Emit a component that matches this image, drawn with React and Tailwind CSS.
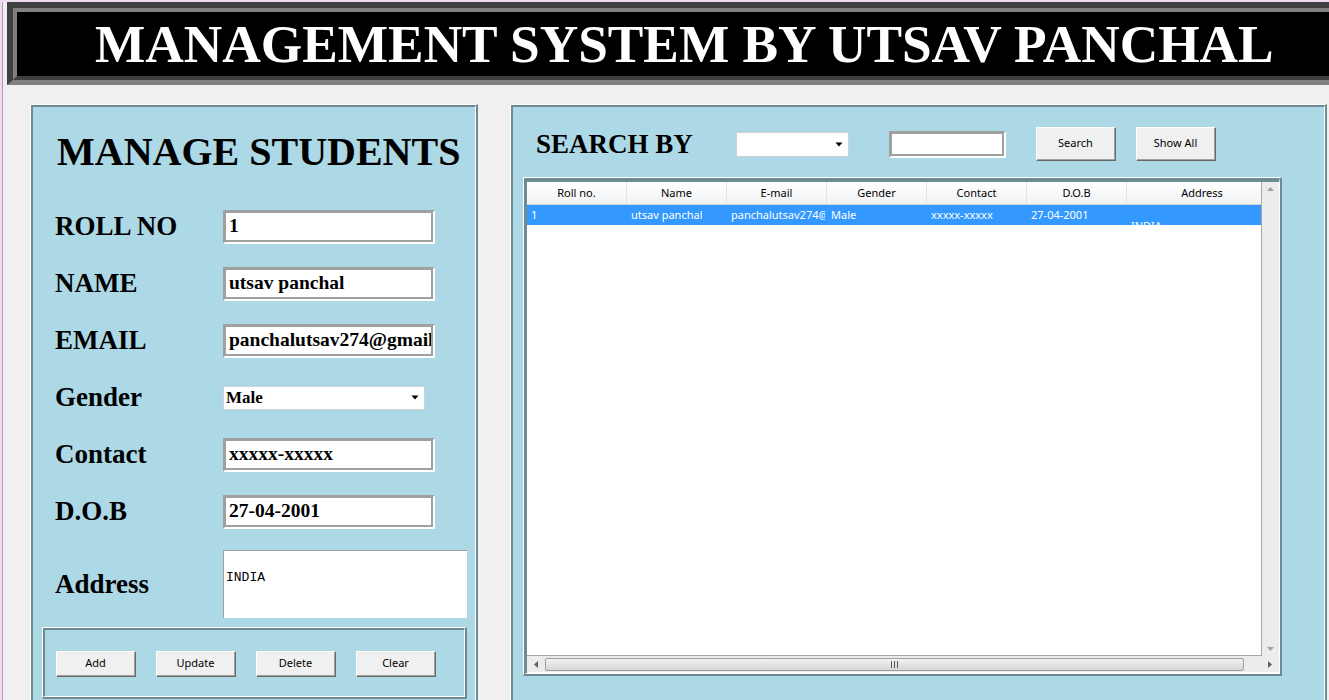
import React from "react";

const SERIF = "font-['Liberation_Serif','Times_New_Roman',serif]";
const SANS = "font-['Noto_Sans','Open_Sans',sans-serif]";
const MONO = "font-['Liberation_Mono','Courier_New',monospace]";

function Ridge({ className = "", innerClass = "", children }) {
  return (
    <div
      className={`border-t border-l border-r-2 border-b-2 border-t-white border-l-white border-r-[#6d8b91] border-b-[#6d8b91] ${className}`}
    >
      <div
        className={`h-full border-t-2 border-l-2 border-r border-b border-t-[#6d8b91] border-l-[#6d8b91] border-r-white border-b-white ${innerClass}`}
      >
        {children}
      </div>
    </div>
  );
}

function Entry({ value = "", w = "w-[212px]", h = "h-[34px]" }) {
  return (
    <div
      className={`${w} ${h} shrink-0 border-t-2 border-l-2 border-b-2 border-r-2 border-t-[#a0a0a0] border-l-[#a0a0a0] border-b-white border-r-white`}
    >
      <div
        className={`h-full border-t border-l border-b-2 border-r-2 border-[#a0a0a0] bg-white flex items-center pl-[3px] overflow-hidden whitespace-nowrap ${SERIF} font-bold text-[19.5px] leading-none text-black`}
      >
        {value}
      </div>
    </div>
  );
}

function Arrow() {
  return (
    <svg width="8" height="5" viewBox="0 0 8 5" className="shrink-0">
      <path d="M0.5 0.5 L7.5 0.5 L4 4.5 Z" fill="#000" />
    </svg>
  );
}

function Combo({ value = "", w, h }) {
  return (
    <div
      className={`${w} ${h} shrink-0 bg-white border border-[#cbd3d7] flex items-center justify-between pl-[2px] pr-[5px]`}
    >
      <span className={`${SERIF} font-bold text-[17px] leading-none text-black`}>{value}</span>
      <Arrow />
    </div>
  );
}

function Btn({ label, h = "h-[26px]" }) {
  return (
    <div
      className={`w-[80px] ${h} shrink-0 bg-[#f0f0f0] border-t border-l border-r border-b border-t-white border-l-white border-r-[#696969] border-b-[#696969]`}
    >
      <div
        className={`h-full border-r border-b border-r-[#a0a0a0] border-b-[#a0a0a0] flex items-center justify-center ${SANS} text-[11px] text-black`}
      >
        {label}
      </div>
    </div>
  );
}

const cols = [
  { h: "Roll no.", v: "1" },
  { h: "Name", v: "utsav panchal" },
  { h: "E-mail", v: "panchalutsav274@gmail.com" },
  { h: "Gender", v: "Male" },
  { h: "Contact", v: "xxxxx-xxxxx" },
  { h: "D.O.B", v: "27-04-2001" },
];

const formRows = [
  { label: "ROLL NO", type: "entry", value: "1" },
  { label: "NAME", type: "entry", value: "utsav panchal" },
  { label: "EMAIL", type: "entry", value: "panchalutsav274@gmail.com" },
  { label: "Gender", type: "combo", value: "Male" },
  { label: "Contact", type: "entry", value: "xxxxx-xxxxx" },
  { label: "D.O.B", type: "entry", value: "27-04-2001" },
];

export default function App() {
  return (
    <div className="w-[1329px] h-[700px] overflow-hidden bg-[#f0f0f0] flex flex-col">
      <div className="h-[2px] shrink-0 bg-[#ecdcec]" />
      <div className="flex flex-1 min-h-0">
        <div className="w-[2px] shrink-0 bg-[#ecdcec]" />
        <div className="w-px shrink-0 bg-[#b49ab4]" />
        <div className="flex-1 min-w-0 flex flex-col">
          {/* Header */}
          <div className="ml-[4px] w-[1360px] shrink-0 border-t-[6px] border-l-[6px] border-b-[5px] border-t-[#404040] border-l-[#404040] border-b-[#808080]">
            <div className="h-[72px] border-t-4 border-l-4 border-b-4 border-t-[#808080] border-l-[#808080] border-b-[#404040] bg-black pl-[78px] pt-[6px]">
              <div
                className={`${SERIF} font-bold text-[53.3px] leading-none text-white whitespace-nowrap`}
              >
                MANAGEMENT SYSTEM BY UTSAV PANCHAL
              </div>
            </div>
          </div>

          <div className="flex mt-[19px]">
            {/* Left panel */}
            <Ridge className="ml-[27px] w-[448px] h-[620px] shrink-0" innerClass="bg-[#add8e6]">
              <div
                className={`pl-[24px] pt-[25px] h-[64px] ${SERIF} font-bold text-[40px] leading-none text-black whitespace-nowrap`}
              >
                MANAGE STUDENTS
              </div>
              <div className="mt-[27px] flex flex-col">
                {formRows.map((r) => (
                  <div key={r.label} className="h-[57px] flex items-center pl-[22px]">
                    <div
                      className={`w-[168px] shrink-0 ${SERIF} font-bold text-[27px] leading-none text-black`}
                    >
                      {r.label}
                    </div>
                    {r.type === "entry" ? (
                      <Entry value={r.value} />
                    ) : (
                      <Combo value={r.value} w="w-[202px]" h="h-[24px]" />
                    )}
                  </div>
                ))}
                <div className="mt-[10px] h-[68px] flex items-center pl-[22px]">
                  <div
                    className={`w-[168px] shrink-0 ${SERIF} font-bold text-[27px] leading-none text-black`}
                  >
                    Address
                  </div>
                  <div
                    className={`w-[244px] h-[68px] shrink-0 bg-white border-t border-l border-[#a0a0a0] pl-[2px] pt-[20px] ${MONO} text-[13px] leading-none text-black`}
                  >
                    INDIA
                  </div>
                </div>
              </div>
              <Ridge
                className="ml-[9px] mt-[9px] w-[425px] h-[72px]"
                innerClass="bg-[#add8e6] flex gap-[20px] pl-[11px] pt-[21px]"
              >
                <Btn label="Add" />
                <Btn label="Update" />
                <Btn label="Delete" />
                <Btn label="Clear" />
              </Ridge>
            </Ridge>

            {/* Right panel */}
            <Ridge className="ml-[32px] w-[817px] h-[620px] shrink-0" innerClass="bg-[#add8e6]">
              <div className="mt-[20px] h-[34px] flex items-center pl-[23px]">
                <div
                  className={`w-[200px] shrink-0 ${SERIF} font-bold text-[27px] leading-none text-black whitespace-nowrap`}
                >
                  SEARCH BY
                </div>
                <Combo value="" w="w-[113px]" h="h-[25px]" />
                <div className="ml-[40px]">
                  <Entry value="" w="w-[117px]" h="h-[27px]" />
                </div>
                <div className="ml-[30px]">
                  <Btn label="Search" h="h-[34px]" />
                </div>
                <div className="ml-[20px]">
                  <Btn label="Show All" h="h-[34px]" />
                </div>
              </div>

              {/* Table frame */}
              <div className="ml-[10px] mt-[16px] w-[759px] border-t border-l border-r-2 border-b-2 border-t-white border-l-white border-r-[#6d8b91] border-b-[#6d8b91]">
                <div className="border-t-4 border-l-[3px] border-r border-b border-t-[#6d8b91] border-l-[#6d8b91] border-r-white border-b-white pb-px bg-white">
                  <div className="w-[752px] h-[490px] flex flex-col bg-white">
                    <div className="flex h-[474px]">
                      <div className="w-[735px] h-full overflow-hidden border-r border-b border-r-[#a8a8a8] border-b-[#a8a8a8] bg-white">
                        <div className="w-[750px]">
                          <div className="flex h-[23px] border-b border-b-[#d5d5d5] bg-linear-to-b from-white to-[#f1f2f4]">
                            {cols.map((c) => (
                              <div
                                key={c.h}
                                className={`w-[100px] shrink-0 border-r border-r-[#e2e3e5] flex items-center justify-center ${SANS} text-[11px] text-black`}
                              >
                                {c.h}
                              </div>
                            ))}
                            <div
                              className={`w-[150px] shrink-0 flex items-center justify-center ${SANS} text-[11px] text-black`}
                            >
                              Address
                            </div>
                          </div>
                          <div className="flex h-[20px] bg-[#3399ff]">
                            {cols.map((c) => (
                              <div key={c.h} className="w-[100px] shrink-0 pl-[4px] pr-[2px] flex items-center">
                                <div
                                  className={`overflow-hidden whitespace-nowrap ${SANS} text-[11px] text-white`}
                                >
                                  {c.v}
                                </div>
                              </div>
                            ))}
                            <div
                              className={`w-[150px] h-[20px] shrink-0 pl-[4px] pt-[14px] overflow-hidden whitespace-nowrap ${SANS} text-[11px] leading-[14px] text-white`}
                            >
                              INDIA
                            </div>
                          </div>
                        </div>
                      </div>
                      {/* vertical scrollbar */}
                      <div className="w-[17px] h-full bg-[#ececec] flex flex-col items-center justify-between py-[5px]">
                        <svg width="7" height="4" viewBox="0 0 7 4">
                          <path d="M0 4 L3.5 0 L7 4 Z" fill="#a2a2a2" />
                        </svg>
                        <svg width="7" height="4" viewBox="0 0 7 4">
                          <path d="M0 0 L7 0 L3.5 4 Z" fill="#a2a2a2" />
                        </svg>
                      </div>
                    </div>
                    {/* horizontal scrollbar */}
                    <div className="h-[16px] bg-[#ececec] flex items-center">
                      <div className="w-[17px] flex justify-center">
                        <svg width="4" height="7" viewBox="0 0 4 7">
                          <path d="M4 0 L0 3.5 L4 7 Z" fill="#606060" />
                        </svg>
                      </div>
                      <div className="w-[699px] h-[13px] ml-px rounded-[2px] border border-[#9e9e9e] bg-linear-to-b from-[#f3f3f3] to-[#d6d6d6] flex items-center justify-center">
                        <svg width="7" height="7" viewBox="0 0 7 7">
                          <path d="M0.5 0 V7 M3.5 0 V7 M6.5 0 V7" stroke="#555" strokeWidth="1" />
                        </svg>
                      </div>
                      <div className="flex-1 flex justify-end pr-[7px]">
                        <svg width="4" height="7" viewBox="0 0 4 7">
                          <path d="M0 0 L4 3.5 L0 7 Z" fill="#606060" />
                        </svg>
                      </div>
                    </div>
                  </div>
                </div>
              </div>
            </Ridge>
          </div>
        </div>
      </div>
    </div>
  );
}
